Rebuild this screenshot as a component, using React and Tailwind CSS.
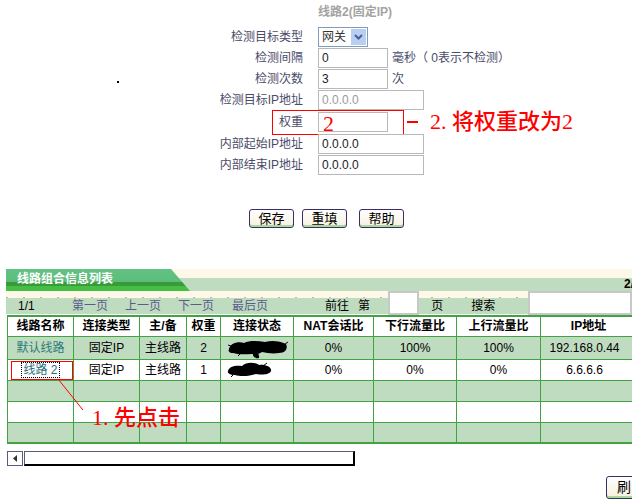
const cols = [66, 66, 47, 34, 73, 80, 83, 84, 96]

function Row({ label, children }) {
  return (
    <div className="relative flex items-center h-[21px]">
      <div className="w-[303px] shrink-0 text-right text-[12px] leading-[14px] text-[#4b4b69]">{label}</div>
      <div className="ml-[15px] flex items-center">{children}</div>
    </div>
  )
}

function Box({ w = 70, children, muted }) {
  return (
    <div
      className={`h-[20px] border border-[#b8b8b8] bg-white pl-[3px] text-[12px] leading-[18px] ${muted ? 'text-[#9a9a9a]' : 'text-[#222]'}`}
      style={{ width: w }}
    >
      {children}
    </div>
  )
}

function Btn({ children, className = '' }) {
  return (
    <div className={`h-[19px] w-[45px] rounded-[3px] border border-[#3b2d6b] bg-[linear-gradient(#ffffff,#f6f0dc)] shadow-[inset_0_-2px_0_#a8d89c] text-center text-[13px] leading-[17px] text-black ${className}`}>
      {children}
    </div>
  )
}

function Blob1() {
  return (
    <svg width="60" height="19" viewBox="0 0 60 19">
      <path d="M1 9 C2 4 9 1 16 3 C22 0 30 1 37 2 C44 0 52 1 58 4 C60 8 58 13 51 13 C45 14 39 13 34 12 C31 14 28 15 24 14 C18 14 11 15 5 13 C1 13 0 11 1 9 Z" fill="#000" />
      <path d="M25 12 C28 12 32 14 31 18 C28 19 24 17 25 12 Z" fill="#000" />
      <path d="M3 6 L0 5 M57 4 L60 2 M12 14 L10 16" stroke="#000" strokeWidth="1" />
    </svg>
  )
}

function Blob2() {
  return (
    <svg width="46" height="16" viewBox="0 0 46 16">
      <path d="M1 9 C2 4 9 3 15 4 C19 0 28 0 32 3 C38 2 45 5 44 9 C42 13 35 13 29 12 C23 14 14 15 8 13 C3 13 0 11 1 9 Z" fill="#000" />
      <path d="M36 4 L40 1 M6 13 L4 15" stroke="#000" strokeWidth="1" />
    </svg>
  )
}

export default function App() {
  return (
    <div className="relative w-[632px] h-[500px] overflow-hidden bg-white font-['Liberation_Sans','Noto_Sans_CJK_SC',sans-serif]">
      {/* form */}
      <div className="pt-[4px]">
        <div className="h-[22px] pl-[318px] text-[12px] leading-[16px] font-bold text-[#a3a3a3]">线路2(固定IP)</div>
        <Row label="检测目标类型">
          <div className="flex h-[20px] w-[50px] items-center border border-[#7f9db9] bg-white">
            <span className="pl-[3px] text-[12px] leading-[14px] text-[#333]">网关</span>
            <div className="ml-auto mr-[1px] flex h-[16px] w-[15px] items-center justify-center bg-[#b8cff3]">
              <svg width="9" height="6" viewBox="0 0 9 6">
                <path d="M1 1 L4.5 4.5 L8 1" stroke="#4b5f8a" strokeWidth="2" fill="none" />
              </svg>
            </div>
          </div>
        </Row>
        <Row label="检测间隔">
          <Box>0</Box>
          <span className="ml-[4px] text-[12px] leading-[14px] text-[#4b4b69]">毫秒（ 0表示不检测）</span>
        </Row>
        <Row label="检测次数">
          <Box>3</Box>
          <span className="ml-[4px] text-[12px] leading-[14px] text-[#4b4b69]">次</span>
        </Row>
        <Row label="检测目标IP地址">
          <Box w={106} muted>0.0.0.0</Box>
        </Row>
        <div className="h-[1px]" />
        <Row label="权重">
          <div className="h-[20px] w-[70px] border border-[#b8b8b8] bg-white pl-[4px] font-['Liberation_Serif',serif] text-[22px] leading-[22px] text-[#ff0000]">2</div>
          <span className="ml-[19px] flex items-center font-['Liberation_Serif','Noto_Sans_CJK_SC',serif] text-[22px] font-medium leading-[22px] text-[#ff0000]">
            <span className="mr-[12px] inline-block h-[2px] w-[11px] bg-[#ff0000]" />
            2. 将权重改为2
          </span>
          <div className="absolute left-[272px] top-[-1px] h-[25px] w-[132px] border border-[#ff0000]" />
        </Row>
        <div className="h-[1px]" />
        <Row label="内部起始IP地址">
          <Box w={106}>0.0.0.0</Box>
        </Row>
        <Row label="内部结束IP地址">
          <Box w={106}>0.0.0.0</Box>
        </Row>
        <div className="mt-[34px] flex pl-[249px]">
          <Btn>保存</Btn>
          <Btn className="ml-[8px]">重填</Btn>
          <Btn className="ml-[12px]">帮助</Btn>
        </div>
      </div>

      {/* list header */}
      <div className="mt-[41px] ml-[6px] flex h-[22px]">
        <div className="w-[184px] shrink-0 [clip-path:polygon(0_0,165px_0,184px_100%,0_100%)] bg-[linear-gradient(#63c283_0,#5bbd7b_13px,#3b983b_13px,#3b983b_17px,#43bf43_17px)]">
          <div className="pl-[11px] pt-[3px] text-[12px] leading-[14px] font-bold text-white">线路组合信息列表</div>
        </div>
        <div className="ml-[-19px] flex flex-1 flex-col">
          <div className="h-[9px] bg-[#fdf8e8]" />
          <div className="flex flex-1 justify-end bg-[#c0dcc0] text-[12px] leading-[13px] font-bold text-black">
            <span className="mr-[-2px]">2/</span>
          </div>
        </div>
      </div>

      {/* pagination */}
      <div className="relative ml-[6px] flex h-[23px] items-end bg-[linear-gradient(to_bottom,#fdf8e8_0,#fdf8e8_7px,#c0dcc0_7px)] text-[12px] leading-[14px]">
        <div className="absolute left-0 right-0 top-[6px] h-[1px] bg-[repeating-linear-gradient(90deg,#b9b9b0_0,#b9b9b0_2px,transparent_2px,transparent_17px)]" />
        <div className="flex h-[16px] items-center">
          <span className="ml-[12px] w-[54px] text-black">1/1</span>
          <span className="w-[53px] text-[#5b5b8c]">第一页</span>
          <span className="w-[53px] text-[#5b5b8c]">上一页</span>
          <span className="w-[54px] text-[#5b5b8c]">下一页</span>
          <span className="w-[93px] text-[#5b5b8c]">最后页</span>
          <span className="w-[33px] text-black">前往</span>
          <span className="w-[30px] text-black">第</span>
        </div>
        <div className="relative mb-[-1px] h-[24px] w-[33px] self-end border-2 border-[#c8c8c8] bg-white" />
        <div className="flex h-[16px] items-center">
          <span className="ml-[12px] w-[40px] text-black">页</span>
          <span className="w-[57px] text-black">搜索</span>
        </div>
        <div className="relative mb-[-1px] h-[24px] w-[110px] self-end border-2 border-[#c8c8c8] bg-white" />
      </div>

      {/* table */}
      <div className="relative mt-[1px] ml-[7px]">
        <table className="table-fixed border-collapse text-[12px] leading-[14px]" style={{ width: 629 }}>
          <colgroup>
            {cols.map((w, i) => (
              <col key={i} style={{ width: w }} />
            ))}
          </colgroup>
          <tbody>
            <tr className="h-[20px] bg-white font-bold text-black">
              {['线路名称', '连接类型', '主/备', '权重', '连接状态', 'NAT会话比', '下行流量比', '上行流量比', 'IP地址'].map(h => (
                <td key={h} className="border border-t-2 border-[#43a343] p-0 text-center">{h}</td>
              ))}
            </tr>
            <tr className="h-[21px] bg-[#c0dcc0] text-black">
              <td className="border border-[#43a343] p-0 text-center text-[#2a7b7b]">默认线路</td>
              <td className="border border-[#43a343] p-0 text-center">固定IP</td>
              <td className="border border-[#43a343] p-0 text-center">主线路</td>
              <td className="border border-[#43a343] p-0 text-center">2</td>
              <td className="border border-[#43a343] p-0">
                <div className="flex justify-center pt-[3px] pl-[2px]"><Blob1 /></div>
              </td>
              <td className="border border-[#43a343] p-0 text-center">0%</td>
              <td className="border border-[#43a343] p-0 text-center">100%</td>
              <td className="border border-[#43a343] p-0 text-center">100%</td>
              <td className="border border-[#43a343] p-0 pr-[8px] text-center">192.168.0.44</td>
            </tr>
            <tr className="h-[21px] bg-white text-black">
              <td className="relative border border-[#43a343] p-0 text-center">
                <span className="outline-1 outline-dotted outline-black px-[1px] text-[#2a6f7b]">线路 2</span>
                <div className="absolute left-[3px] top-[1px] h-[19px] w-[62px] border border-[#ff0000]" />
              </td>
              <td className="border border-[#43a343] p-0 text-center">固定IP</td>
              <td className="border border-[#43a343] p-0 text-center">主线路</td>
              <td className="border border-[#43a343] p-0 text-center">1</td>
              <td className="border border-[#43a343] p-0">
                <div className="flex justify-center pt-[1px] pr-[14px]"><Blob2 /></div>
              </td>
              <td className="border border-[#43a343] p-0 text-center">0%</td>
              <td className="border border-[#43a343] p-0 text-center">0%</td>
              <td className="border border-[#43a343] p-0 text-center">0%</td>
              <td className="border border-[#43a343] p-0 pr-[8px] text-center">6.6.6.6</td>
            </tr>
            {['bg-[#c0dcc0]', 'bg-white', 'bg-[#c0dcc0]'].map((bg, r) => (
              <tr key={r} className={`h-[21px] ${bg}`}>
                {cols.map((_, i) => (
                  <td key={i} className={`border border-[#43a343] p-0 ${r === 2 ? 'border-b-2' : ''}`} />
                ))}
              </tr>
            ))}
          </tbody>
        </table>
        <svg className="absolute left-0 top-0" width="100" height="100">
          <line x1="51" y1="64" x2="76" y2="95" stroke="#ff0000" strokeWidth="1" />
        </svg>
        <div className="absolute left-[85px] top-[91px] font-['Liberation_Serif','Noto_Sans_CJK_SC',serif] text-[22px] font-medium leading-[24px] text-[#ff0000]">
          1. 先点击
        </div>
      </div>

      {/* scrollbar */}
      <div className="mt-[7px] ml-[7px] flex h-[15px]">
        <div className="flex h-[15px] w-[16px] items-center justify-center border border-[#5b5b7b] bg-white">
          <svg width="5" height="7" viewBox="0 0 5 7"><path d="M4 0 L0 3.5 L4 7 Z" fill="#333" /></svg>
        </div>
        <div className="ml-[1px] h-[15px] w-[331px] border border-[#5b5b7b] border-r-2 border-b-2 border-r-black border-b-black bg-white" />
      </div>

      {/* refresh button */}
      <div className="mt-[10px] flex justify-end">
        <div className="mr-[-12px] h-[23px] w-[38px] rounded-[3px] border border-[#3b2d6b] bg-[linear-gradient(#ffffff,#f6f0dc)] shadow-[inset_0_-2px_0_#a8d89c] pl-[10px] text-[14px] leading-[21px] text-black">刷</div>
      </div>

      <div className="absolute left-[117px] top-[81px] h-[2px] w-[2px] bg-black" />
    </div>
  )
}
